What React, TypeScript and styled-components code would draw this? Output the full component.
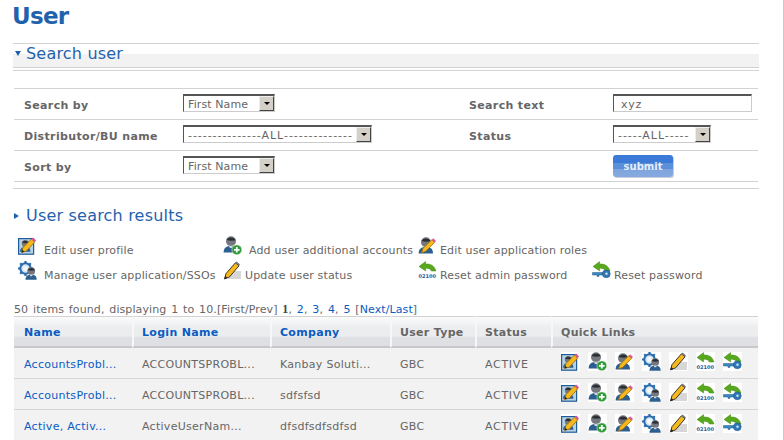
import React, { type ReactElement } from 'react'
import { styled, createGlobalStyle } from 'styled-components'

const GlobalStyle = createGlobalStyle`
  html, body {
    margin: 0;
    padding: 0;
    background: #fff;
  }

  body {
    font-family: "DejaVu Sans", Verdana, sans-serif;
    font-size: 11px;
    color: #666;
  }

  * {
    box-sizing: border-box;
  }
`

const Page = styled.div`
  width: 784px;
  height: 440px;
  overflow: hidden;
  padding: 0 24px 0 13px;
  border-right: 1px solid #bccbd9;
`

const Title = styled.h1`
  margin: 0 0 0 -1px;
  height: 43px;
  padding-top: 2px;
  font-size: 23px;
  line-height: 28px;
  font-weight: bold;
  letter-spacing: -0.7px;
  color: #1f62ad;
`

const SearchHead = styled.div`
  display: flex;
  align-items: center;
  height: 25px;
  padding: 0 0 4px 2px;
  border-top: 1px solid #d2d2d2;
  border-bottom: 1px solid #d2d2d2;
  background: linear-gradient(#fff 10px, #f2f2f2 10px);
`

const HeadRule = styled.div`
  height: 1px;
  margin-top: 2px;
  background: #d2d2d2;
`

const HeadText = styled.h2`
  margin: 0 0 0 5px;
  font-size: 16px;
  line-height: 20px;
  font-weight: normal;
  letter-spacing: 0.2px;
  color: #1f62ad;
`

const FilterForm = styled.div`
  margin: 17px 1px 0 1px;
  border-top: 1px solid #d2d2d2;
`

const FilterRow = styled.div`
  display: grid;
  grid-template-columns: 169px 276px 154px 1fr;
  align-items: center;
  height: 31px;
  border-bottom: 1px solid #d2d2d2;
`

const Label = styled.label`
  padding: 3px 0 0 10px;
  font-weight: bold;
  letter-spacing: 0.35px;
  color: #666;
  white-space: nowrap;
`

const Field = styled.div`
  display: flex;
  align-items: center;
`

const SelectBox = styled.div<{ $width: number }>`
  display: flex;
  justify-content: space-between;
  width: ${(props) => props.$width}px;
  height: 18px;
  margin-bottom: 2px;
  border-style: solid;
  border-width: 2px 1px 1px 1px;
  border-color: #555 #ccc #ccc #555;
`

const SelectValue = styled.span<{ $dashed?: boolean }>`
  padding-left: 4px;
  line-height: 17px;
  letter-spacing: ${(props) => (props.$dashed ? '0.95px' : '0.1px')};
  color: #666;
  white-space: nowrap;
`

const SelectArrow = styled.span`
  display: flex;
  align-items: center;
  justify-content: center;
  width: 15px;
  height: 15px;
  background: #d4d0c8;
  border-style: solid;
  border-width: 1px;
  border-color: #eee #444 #444 #eee;

  &::after {
    content: '';
    border-style: solid;
    border-width: 3px 3px 0 3px;
    border-color: #000 transparent transparent transparent;
  }
`

const TextInput = styled.input`
  width: 139px;
  height: 18px;
  margin-bottom: 2px;
  padding: 1px 0 0 7px;
  border-style: solid;
  border-width: 2px 1px 1px 1px;
  border-color: #555 #ccc #ccc #555;
  outline: none;
  font-family: inherit;
  font-size: 11px;
  letter-spacing: 0.8px;
  color: #666;
`

const SubmitButton = styled.button`
  width: 60px;
  height: 22px;
  padding: 0;
  border: none;
  border-radius: 3px;
  background: linear-gradient(#3b7ad6 0, #3b7ad6 35%, #5a8fd9 35%, #5a8fd9 65%, #7fa5de 65%, #86aadf 100%);
  box-shadow: 1px 1px 0 #ccd;
  font-family: inherit;
  font-size: 10px;
  font-weight: bold;
  color: #e6eefa;
`

const EndRule = styled.div`
  height: 1px;
  margin-top: 6px;
  background: #d2d2d2;
`

const ResultsHead = styled.div`
  display: flex;
  align-items: center;
  height: 20px;
  margin-top: 17px;
  padding-left: 1px;
`

const LegendGrid = styled.div`
  display: grid;
  grid-template-columns: 205px 195px 174px 1fr;
  grid-template-rows: 25px 25px;
  margin: 4px 0 0 5px;
`

const LegendItem = styled.div<{ $gap?: number }>`
  display: flex;
  align-items: flex-end;
  gap: ${(props) => props.$gap ?? 7}px;
  white-space: nowrap;
  letter-spacing: 0.15px;
  line-height: 9px;
  color: #666;
`

const Pager = styled.div`
  margin: 22px 0 0 1px;
  height: 14px;
  line-height: 14px;
  white-space: nowrap;
  letter-spacing: 0.1px;
  word-spacing: 1.2px;
  color: #666;

  b {
    color: #444;
    font-family: "Liberation Serif", serif;
    font-size: 12px;
  }

  a {
    color: #0a5cc2;
  }
`

const Results = styled.table`
  width: 744px;
  margin-left: 1px;
  border-collapse: separate;
  border-spacing: 0;
  table-layout: fixed;
  background: #f2f2f2;
`

const HeadCell = styled.th<{ $link?: boolean; $width: number }>`
  width: ${(props) => props.$width}px;
  height: 32px;
  padding: 2px 0 0 8px;
  border-top: 1px solid #d2d2d2;
  border-bottom: 2px solid #c8c8c8;
  border-left: 2px solid #f7f7f8;
  background: linear-gradient(#fbfbfb 0, #f1f2f3 25%, #ecedef 35%, #ecedef 65%, #dfe0e3 72%, #dfe0e3 100%);
  text-align: left;
  font-weight: bold;
  letter-spacing: 0.3px;
  color: ${(props) => (props.$link ? '#0a5cc2' : '#666')};

  &:first-child {
    padding-left: 10px;
    border-left: none;
  }
`

const Cell = styled.td<{ $wide?: boolean }>`
  height: 31px;
  padding: 2px 0 0 10px;
  border-bottom: 1px solid #d6d6d6;
  letter-spacing: ${(props) => (props.$wide ? '0.7px' : '0.28px')};
  white-space: nowrap;
  color: #666;

  a {
    color: #0a5cc2;
  }
`

const QuickLinks = styled.div`
  display: flex;
  gap: 8px;
  margin-top: -5px;
`

const IconBox = styled.svg`
  display: block;
  flex: none;
  width: 19px;
  height: 19px;
  background: #fff;
`

const Bust = ({ x = 0, y = 0 }: { x?: number; y?: number }): ReactElement => (
  <g transform={`translate(${x} ${y})`}>
    <path d="M0.6 17 C0.6 12 3.6 10.4 8 10.4 C12.4 10.4 15 12 15 17 Z" fill="#2c5f8f" />
    <circle cx="8" cy="5.8" r="5" fill="#75797f" />
    <path d="M3.6 4.6 C5 1 11 1 12.6 4.8 C10 5.4 6.5 5.4 3.6 4.6 Z" fill="#2b2f34" />
    <path d="M6 10.2 L10 10.2 L9.2 12.4 L6.8 12.4 Z" fill="#d0d6db" />
  </g>
)

const EditProfileIcon = (): ReactElement => (
  <IconBox viewBox="0 0 19 19">
    <rect x="0.6" y="2.6" width="15" height="15.6" fill="#b7d2e6" stroke="#1d5c96" strokeWidth="1.2" />
    <g transform="translate(1.6 3.4) scale(0.72)">
      <Bust />
    </g>
    <path d="M3.5 16.5 L5 11.5 L13.5 3 L16.6 6.1 L8.5 15 Z" fill="#f6b91c" stroke="#9a6a10" strokeWidth="0.8" />
    <path d="M3.5 16.5 L4.3 13.7 L6.3 15.7 Z" fill="#222" />
    <path d="M13.5 3 L15 1.4 L18.2 4.6 L16.6 6.1 Z" fill="#e0559a" />
  </IconBox>
)

const AddUserIcon = (): ReactElement => (
  <IconBox viewBox="0 0 19 19">
    <Bust y={-0.5} />
    <circle cx="13.8" cy="13.8" r="4.9" fill="#2e9a36" stroke="#cfe8cf" strokeWidth="0.6" />
    <path d="M13.8 11 V16.6 M11 13.8 H16.6" stroke="#fff" strokeWidth="1.8" />
  </IconBox>
)

const EditRolesIcon = (): ReactElement => (
  <IconBox viewBox="0 0 19 19">
    <Bust y={0.5} />
    <path d="M3.5 17 L5 12.5 L13.8 3.7 L16.6 6.5 L7.8 15.3 Z" fill="#f6b91c" stroke="#9a6a10" strokeWidth="0.8" />
    <path d="M13.8 3.7 L15.2 2.3 L18 5.1 L16.6 6.5 Z" fill="#e0559a" />
  </IconBox>
)

const ManageIcon = (): ReactElement => (
  <IconBox viewBox="0 0 19 19">
    <circle cx="7.5" cy="7.5" r="5.2" fill="#d7e6f2" stroke="#2a6cab" strokeWidth="2" />
    <path
      d="M7.5 0 V3 M7.5 12 V15 M0 7.5 H3 M12 7.5 H15 M2.2 2.2 L4.2 4.2 M10.8 10.8 L12.8 12.8 M12.8 2.2 L10.8 4.2 M2.2 12.8 L4.2 10.8"
      stroke="#2a6cab"
      strokeWidth="2.2"
    />
    <circle cx="7.5" cy="7.5" r="2.4" fill="#f4f8fb" />
    <g transform="translate(7 5.6) scale(0.78)">
      <Bust />
    </g>
  </IconBox>
)

const StatusIcon = (): ReactElement => (
  <IconBox viewBox="0 0 19 19">
    <path d="M10 11 H18 M9 13 H18 M7 15 H18 M5 17 H18" stroke="#9a9a9a" strokeWidth="0.8" />
    <path d="M1.5 18 L3 12.6 L12.4 1.8 L16 4.8 L6.6 15.8 Z" fill="#f6b91c" stroke="#222" strokeWidth="0.9" />
    <path d="M1.5 18 L2.3 15 L4.6 16.9 Z" fill="#222" />
    <path d="M12.4 1.8 L13.6 0.6 L17 3.4 L16 4.8 Z" fill="#777" />
  </IconBox>
)

const ArrowShape = (): ReactElement => (
  <path d="M1 5.5 L7.6 0.6 L7.6 3 C12.4 2.8 16.4 4.6 18 10 L13.4 10 C12.6 7.8 10.4 7 7.6 7.2 L7.6 10 Z" fill="#58a81e" stroke="#3f8a12" strokeWidth="0.5" />
)

const ResetAdminIcon = (): ReactElement => (
  <IconBox viewBox="0 0 19 19">
    <ArrowShape />
    <text x="0.4" y="16.6" fontFamily="DejaVu Sans" fontSize="5" fontWeight="bold" textLength="17.8" fill="#17609f">
      02100
    </text>
  </IconBox>
)

const ResetPasswordIcon = (): ReactElement => (
  <IconBox viewBox="0 0 19 19">
    <ArrowShape />
    <path d="M0.5 11.5 H11 V14 H7 V15.4 H5 V14 H0.5 Z" fill="#3f86bd" stroke="#1b5a8e" strokeWidth="0.5" />
    <circle cx="14.3" cy="12.8" r="3.9" fill="#2f78b4" stroke="#1b5a8e" strokeWidth="0.6" />
    <circle cx="14.5" cy="12.8" r="1.2" fill="#cfe3f2" />
  </IconBox>
)

const legend = [
  { icon: <EditProfileIcon />, text: 'Edit user profile' },
  { icon: <AddUserIcon />, text: 'Add user additional accounts' },
  { icon: <EditRolesIcon />, text: 'Edit user application roles', gap: 3 },
  { text: '' },
  { icon: <ManageIcon />, text: 'Manage user application/SSOs' },
  { icon: <StatusIcon />, text: 'Update user status', gap: 3 },
  { icon: <ResetAdminIcon />, text: 'Reset admin password', gap: 3 },
  { icon: <ResetPasswordIcon />, text: 'Reset password', gap: 3 },
]

const rows = [
  { name: 'AccountsProbl...', login: 'ACCOUNTSPROBL...', company: 'Kanbay Soluti...' },
  { name: 'AccountsProbl...', login: 'ACCOUNTSPROBL...', company: 'sdfsfsd' },
  { name: 'Active, Activ...', login: 'ActiveUserNam...', company: 'dfsdfsdfsdfsd' },
]

const TriangleDown = styled.span`
  width: 0;
  height: 0;
  border-style: solid;
  border-width: 5px 3.5px 0 3.5px;
  border-color: #1f62ad transparent transparent transparent;
`

const TriangleRight = styled.span`
  width: 0;
  height: 0;
  border-style: solid;
  border-width: 3.5px 0 3.5px 5px;
  border-color: transparent transparent transparent #1f62ad;
  margin-right: 2px;
`

const Select = ({ value, width, dashed }: { value: string; width: number; dashed?: boolean }): ReactElement => (
  <SelectBox $width={width}>
    <SelectValue $dashed={dashed}>{value}</SelectValue>
    <SelectArrow />
  </SelectBox>
)

export default function App(): ReactElement {
  return (
    <Page>
      <GlobalStyle />
      <Title>User</Title>

      <SearchHead>
        <TriangleDown />
        <HeadText>Search user</HeadText>
      </SearchHead>
      <HeadRule />

      <FilterForm>
        <FilterRow>
          <Label>Search by</Label>
          <Field>
            <Select value="First Name" width={92} />
          </Field>
          <Label>Search text</Label>
          <Field>
            <TextInput defaultValue="xyz" />
          </Field>
        </FilterRow>
        <FilterRow>
          <Label>Distributor/BU name</Label>
          <Field>
            <Select value="---------------ALL--------------" width={189} dashed />
          </Field>
          <Label>Status</Label>
          <Field>
            <Select value="-----ALL-----" width={98} dashed />
          </Field>
        </FilterRow>
        <FilterRow>
          <Label>Sort by</Label>
          <Field>
            <Select value="First Name" width={92} />
          </Field>
          <span />
          <Field>
            <SubmitButton>submit</SubmitButton>
          </Field>
        </FilterRow>
      </FilterForm>
      <EndRule />

      <ResultsHead>
        <TriangleRight />
        <HeadText>User search results</HeadText>
      </ResultsHead>

      <LegendGrid>
        {legend.map((item, i) => (
          <LegendItem key={i} $gap={item.gap}>
            {item.icon}
            <span>{item.text}</span>
          </LegendItem>
        ))}
      </LegendGrid>

      <Pager>
        50 items found, displaying 1 to 10.[First/Prev] <b>1</b>, <a>2</a>, <a>3</a>, <a>4</a>, <a>5</a> [<a>Next/Last</a>]
      </Pager>

      <Results>
        <thead>
          <tr>
            <HeadCell $link $width={118}>Name</HeadCell>
            <HeadCell $link $width={138}>Login Name</HeadCell>
            <HeadCell $link $width={120}>Company</HeadCell>
            <HeadCell $width={85}>User Type</HeadCell>
            <HeadCell $width={76}>Status</HeadCell>
            <HeadCell $width={207}>Quick Links</HeadCell>
          </tr>
        </thead>
        <tbody>
          {rows.map((row, i) => (
            <tr key={i}>
              <Cell><a>{row.name}</a></Cell>
              <Cell>{row.login}</Cell>
              <Cell>{row.company}</Cell>
              <Cell>GBC</Cell>
              <Cell $wide>ACTIVE</Cell>
              <Cell>
                <QuickLinks>
                  <EditProfileIcon />
                  <AddUserIcon />
                  <EditRolesIcon />
                  <ManageIcon />
                  <StatusIcon />
                  <ResetAdminIcon />
                  <ResetPasswordIcon />
                </QuickLinks>
              </Cell>
            </tr>
          ))}
        </tbody>
      </Results>
    </Page>
  )
}
